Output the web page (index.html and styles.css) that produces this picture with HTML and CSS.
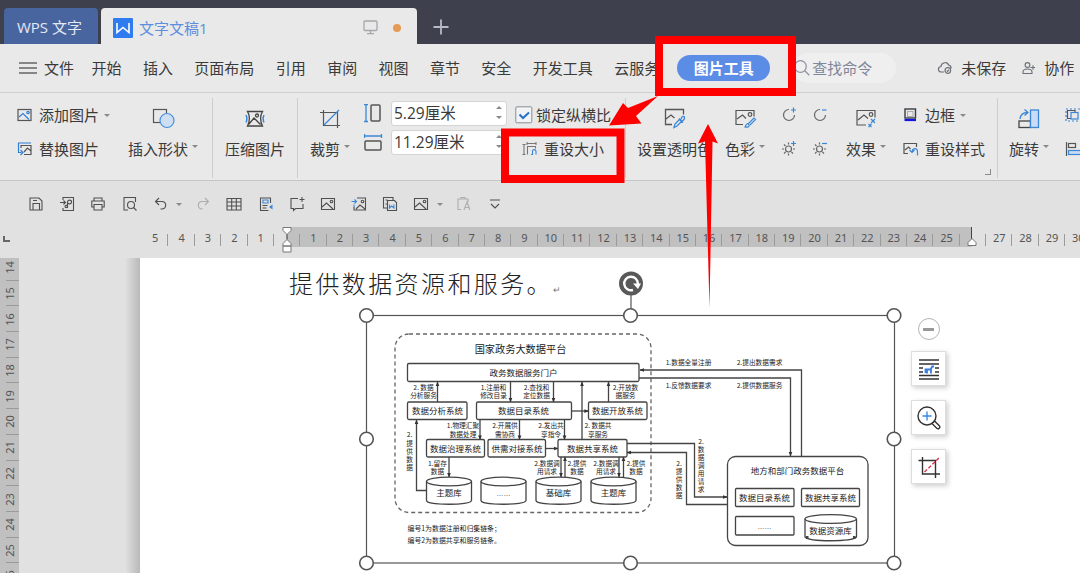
FILE: index.html
```html
<!DOCTYPE html>
<html>

	<head>
		<meta charset="UTF-8">
		<title>文字文稿1</title>
		<link rel="stylesheet" href="styles.css">
		<script src="ruler.js" type="text/javascript" charset="utf-8"></script>
	</head>

	<body>
		<!--标题栏-->
		<div class="titlebar">
			<div class="home-tab">WPS 文字</div>
			<div class="doc-tab">
				<svg class="logo" width="20" height="20"><rect width="20" height="20" rx="1" fill="#2f7bf0"/><path d="M4 5v9.500l6-5 6 5V5" fill="none" stroke="#fff" stroke-width="1.600"/></svg>
				<span class="doc-name">文字文稿1</span>
				<svg width="15" height="15" fill="none" stroke="#a5a7ab" stroke-width="1.300"><rect x="1" y="1" width="13" height="9.500" rx="1"/><path d="M7.500 10.500v3.200M4 13.700h7"/></svg>
				<i class="dot"></i>
			</div>
			<svg class="plus" width="16" height="16"><path d="M8 0.500v15M0.500 8h15" stroke="#b9bbc4" stroke-width="1.800"/></svg>
		</div>

		<!--菜单栏-->
		<div class="menubar">
			<svg class="burger" width="18" height="13"><path d="M0 1h18M0 6h18M0 11h18" stroke="#666" stroke-width="1.300"/></svg>
			<span class="file">文件</span>
			<div class="menu">
				<span>开始</span>
				<span>插入</span>
				<span>页面布局</span>
				<span>引用</span>
				<span>审阅</span>
				<span>视图</span>
				<span>章节</span>
				<span>安全</span>
				<span>开发工具</span>
				<span>云服务</span>
			</div>
			<span class="active">图片工具</span>
			<div class="search">
				<svg width="18" height="18" fill="none" stroke="#8e93a5" stroke-width="1.300"><circle cx="7.500" cy="7.500" r="5.800"/><path d="M11.800 11.800l4.500 4.500"/></svg>
				<span>查找命令</span>
			</div>
			<svg class="cloud" width="16" height="14" fill="none" stroke="#6c7078" stroke-width="1.200"><path d="M7 11H4.500C0.500 11 0.500 6 4 5.500 4.500 1 10.500 0.500 11.500 4c2 0.500 2.800 2 2.500 3.500"/><circle cx="10.800" cy="9.500" r="2.800"/><path d="M9.800 9.500l0.800 0.800 1.200-1.400"/></svg>
			<span class="unsaved">未保存</span>
			<svg class="user" width="14" height="14" fill="none" stroke="#6c7078" stroke-width="1.100"><circle cx="5.500" cy="4" r="2.400"/><path d="M1 12.500V11c0-4 9-4 9 0v1.500zM8.500 6.500h4.500M11 4.300v4.500"/></svg>
			<span>协作</span>
		</div>

		<!--功能区-->
		<div class="ribbon">
			<div class="group g-insert">
				<div class="stack">
					<div class="line">
						<svg width="16" height="14" fill="none" stroke="#555" stroke-width="1.200"><rect x="1" y="1.500" width="13" height="11"/><path d="M2 9l4-3.500 6 6" stroke="#2f7fd6"/><circle cx="11" cy="4.500" r="1.200" stroke="#2f7fd6"/></svg>
						<span>添加图片</span><i class="caret"></i>
					</div>
					<div class="line">
						<svg width="16" height="14" fill="none" stroke="#555" stroke-width="1.200"><path d="M4 6V3.500h10v9H7M7 10l3.500-4L14 9"/><path d="M14 1H1.500v9.500h3M3.500 8l2.500 2.500-2.500 2.500" stroke="#2f7fd6"/></svg>
						<span>替换图片</span>
					</div>
				</div>
				<div class="tool">
					<svg width="24" height="24" fill="none" stroke="#555" stroke-width="1.200"><rect x="2.500" y="2.500" width="13" height="13"/><circle cx="16" cy="13.500" r="7" fill="#cfdff3" stroke="#4a8fdc"/></svg>
					<div class="label">插入形状<i class="caret"></i></div>
				</div>
			</div>

			<div class="group g-zip">
				<div class="tool">
					<svg width="24" height="24" fill="none" stroke="#444" stroke-width="1.300"><path d="M4.500 4.500h15c-2.500 4-2.500 10 0 14.500h-15c2.500-4.500 2.500-10.500 0-14.500zM6 17l5-6 6.500 6.500"/><circle cx="14" cy="8.500" r="1.500"/><path d="M3 8c1.200 2.500 1.200 5 0 7.500M21 8c-1.200 2.500-1.200 5 0 7.500" stroke="#3a87d8" stroke-width="1.500"/></svg>
					<div class="label">压缩图片</div>
				</div>
			</div>

			<div class="group g-size">
				<div class="tool crop">
					<svg width="24" height="24" fill="none" stroke="#555" stroke-width="1.200"><path d="M5.500 3v15.500H22M2 5.500h17.500V21"/><path d="M6 18L21 3" stroke="#3a87d8"/></svg>
					<div class="label">裁剪<i class="caret"></i></div>
				</div>
				<div class="dims">
					<div class="dim">
						<svg width="20" height="20" fill="none" stroke="#555" stroke-width="1.500"><rect x="7" y="1" width="9" height="16" rx="1"/><path d="M2 0.500v17M0 0.500h4M0 17.500h4" stroke="#3a87d8" stroke-width="1.300"/></svg>
						<div class="field"><span>5.29厘米</span><b><i class="up"></i><i class="caret"></i></b></div>
					</div>
					<div class="dim">
						<svg width="20" height="20" fill="none" stroke="#555" stroke-width="1.500"><rect x="1" y="8" width="16" height="9" rx="1"/><path d="M0.500 3h17M0.500 1v4M17.500 1v4" stroke="#3a87d8" stroke-width="1.300"/></svg>
						<div class="field"><span>11.29厘米</span><b><i class="up"></i><i class="caret"></i></b></div>
					</div>
				</div>
				<div class="stack">
					<div class="line lock">
						<svg width="18" height="18" fill="none"><rect x="0.800" y="0.800" width="16" height="16" rx="1" fill="#f1f3f5" stroke="#8a8d92"/><path d="M4.500 8.500l3.500 3.500 6-5.500" stroke="#2570c8" stroke-width="2"/></svg>
						<span>锁定纵横比</span>
					</div>
					<div class="line reset">
						<svg width="16" height="14" fill="none" stroke="#777" stroke-width="1.100"><path d="M2 2.500v10M0.500 2.500h3M0.500 12.500h3M5 1.500h9M5 0v3M14 0v3M5.500 12.500v-8h8v2"/><path d="M9 12.500h1.500v-3c0-2.500 3.500-2.500 3.500 0v3" stroke="#3a87d8"/></svg>
						<span>重设大小</span>
					</div>
				</div>
			</div>

			<div class="group g-style">
				<div class="tool alpha">
					<svg width="24" height="24" fill="none" stroke="#555" stroke-width="1.300"><path d="M9 17.500H2.500v-15h18v5M3 12l5-4 3.500 3"/><path d="M11 20.500l1-3.500 4.500-4.500 2 2-4.500 4.500zM16 11.500l4 4M18 12.500c0.500-3.500 3.500-4 3.500-2s-1 3-2.500 3.500" stroke="#3a87d8"/></svg>
					<div class="label">设置透明色</div>
				</div>
				<div class="tool color">
					<svg width="24" height="24" fill="none" stroke="#555" stroke-width="1.200"><path d="M10 17.500H3v-14h18v6M4 12l5.500-4 3.500 3.500"/><circle cx="17" cy="7.500" r="1.800"/><path d="M12 20c1.500-4 3-4 4-2s-2 2.500-4 2zM15.500 16.500l5.500-5.500 1.500 1.500L17 18" stroke="#3a87d8"/></svg>
					<div class="label">色彩<i class="caret"></i></div>
				</div>
				<div class="minis">
					<svg viewBox="0 0 16 16"><path d="M8 2.500A5.500 5.500 0 1 0 13.500 8"/><path d="M12.500 0.500v5M10 3h5" class="blue"/></svg>
					<svg viewBox="0 0 16 16"><path d="M8 2.500A5.500 5.500 0 1 0 13.500 8"/><path d="M10 3h4.500" class="blue"/></svg>
					<svg viewBox="0 0 16 16"><circle cx="7.500" cy="9" r="3"/><path d="M7.500 2.500v2M7.500 13.500v2M1 9h2M12 9h2M3 4.500l1.500 1.500M3 13.500l1.500-1.500M12 13.500l-1.500-1.500"/><path d="M12.500 1v5M10 3.500h5" class="blue"/></svg>
					<svg viewBox="0 0 16 16"><circle cx="7.500" cy="9" r="3"/><path d="M7.500 2.500v2M7.500 13.500v2M1 9h2M12 9h2M3 4.500l1.500 1.500M3 13.500l1.500-1.500M12 13.500l-1.500-1.500"/><path d="M10 3.500h5" class="blue"/></svg>
				</div>
				<div class="tool effect">
					<svg width="24" height="24" fill="none" stroke="#555" stroke-width="1.200"><path d="M12 18H3V3.500h18v7M4 13l6-5 4 3.500"/><circle cx="17" cy="7.500" r="1.800"/><path d="M17 12l4 4M21 12l-4 4M14.500 17l3 3M17.500 17l-3 3" stroke="#3a87d8"/></svg>
					<div class="label">效果<i class="caret"></i></div>
				</div>
				<div class="stack frame">
					<div class="line">
						<svg width="16" height="14" fill="none"><rect x="2" y="1" width="10.500" height="9" stroke="#3a3c44" stroke-width="1.400"/><rect x="4.500" y="3.500" width="5.500" height="5" stroke="#aaa"/><path d="M1.500 12h11.500" stroke="#1414e0" stroke-width="2.200"/></svg>
						<span>边框</span><i class="caret"></i>
					</div>
					<div class="line">
						<svg width="16" height="14" fill="none" stroke="#555" stroke-width="1.200"><path d="M5 11.500H1V1.500h12.500V5M2 8l3.500-3 2 2"/><path d="M6.500 8l2.500 2.500L11.500 8M9 10.500c0-5 5.500-5 5.500-1v4" stroke="#3a87d8"/></svg>
						<span>重设样式</span>
					</div>
				</div>
				<i class="corner"></i>
			</div>

			<div class="group g-arrange">
				<div class="tool">
					<svg width="24" height="24" fill="none" stroke="#444" stroke-width="1.300"><rect x="2" y="14" width="11.500" height="6.500"/><rect x="13.500" y="3" width="8" height="17.500" fill="#c9dcf3" stroke="#3a87d8"/><path d="M3 12c0.500-4 3-6.500 7.500-6.500M7.500 2.500l3.500 3-3.500 3" stroke="#3a87d8"/></svg>
					<div class="label">旋转<i class="caret"></i></div>
				</div>
				<div class="stack">
					<div class="line"><svg width="16" height="14" fill="none" stroke="#555" stroke-width="1.200"><rect x="1" y="1" width="18" height="12" stroke="#3a87d8" stroke-dasharray="2 2"/><path d="M10 4V2.500H2.500v8H6"/><rect x="6" y="4.500" width="7" height="6.500" stroke="#3a87d8"/></svg></div>
					<div class="line"><svg width="16" height="14" fill="none" stroke="#555" stroke-width="1.200"><path d="M1.500 0v14"/><rect x="3.500" y="1.500" width="7" height="4"/><rect x="3.500" y="8.500" width="14" height="4" fill="#c9dcf3" stroke="#3a87d8"/></svg></div>
				</div>
			</div>
		</div>

		<!--快速访问工具栏-->
		<div class="quickbar">
			<svg viewBox="0 0 16 16"><path d="M2 2h9l3 3v9H2zM5 14V7.500h6.500V14M5 4.500h4"/></svg>
			<svg viewBox="0 0 16 16"><path d="M4 4V1.500h10.500v13H4V12M1 6.500h5.500M4.500 4.500l2 2-2 2"/><path d="M8.500 12V6c0-2.500 4-2.500 4 0s-4 2.500-4 0M6 10.500c0-1.500 2.500-1.500 2.500 0s-2.500 1.500-2.500 0"/></svg>
			<svg viewBox="0 0 16 16"><path d="M4 5V2h8v3M4 11H1.800V5h12.400v6H12M4 8.500h8v5.500H4z"/></svg>
			<svg viewBox="0 0 16 16"><path d="M6 14H2V1.500h11.500V6"/><circle cx="9" cy="9" r="3.500"/><path d="M11.500 11.500L14.500 14.500"/></svg>
			<svg viewBox="0 0 16 16"><path d="M6 2L2.500 5.500 6 9M3 5.500h6c5 0 5 7.500-0.500 7.500H7.500"/></svg>
			<i class="caret"></i>
			<svg viewBox="0 0 16 16" class="off redo"><path d="M10 2l3.500 3.500L10 9M13 5.500H7c-5 0-5 7.500 0.500 7.500"/></svg>
			<svg viewBox="0 0 16 16"><path d="M1 2.500h14v11.500H1zM1 6h14M1 10h14M5.700 2.500V14M10.300 2.500V14"/></svg>
			<svg viewBox="0 0 16 16"><path d="M12.500 7V2h-10v12.500h8M4.500 9.500h5M4.500 12h4"/><path d="M5 4h5v3H5z" class="blue"/><path d="M14.500 8.500v5l-3.500-2.500z" class="fill"/></svg>
			<svg viewBox="0 0 16 16"><path d="M9 2.500H2v10h2.500v2l2-2H14V8M10.500 3.500h5M13 1v5"/></svg>
			<svg viewBox="0 0 16 16"><path d="M1.500 2.500h13v11h-13zM2 11l4.500-4L13 13"/><circle cx="11.500" cy="5.500" r="1.300"/></svg>
			<svg viewBox="0 0 16 16"><path d="M6 2h8.500v12H3v-3M5 13l4-4 5 4"/><circle cx="11.500" cy="5.500" r="1.300"/><path d="M0.500 5.500h5M3.500 3.500l2 2-2 2M3 8.500v3" class="blue"/></svg>
			<svg viewBox="0 0 16 16"><path d="M5 12H1.500V1.500H11V4M3.500 4h2M3.500 8h2M5.500 4.500h7l2 2v8h-9z"/><path d="M7.500 8.500v3.500l2.200-2 2.200 2V8.500" class="blue"/></svg>
			<svg viewBox="0 0 16 16" class="pic"><path d="M1.500 2.500h13v11h-13zM2 11l4.500-4L13 13"/><circle cx="11.500" cy="5.500" r="1.300"/></svg>
			<i class="caret"></i>
			<svg viewBox="0 0 16 16" class="off paste"><path d="M5 13.500H2V3h10v3M5 3V1.500h4V3M8 14l3-8 3 8M9 11.500h4"/></svg>
			<svg viewBox="0 0 16 16" class="more"><path d="M3 4h10M4 8l4 4 4-4"/></svg>
		</div>

		<!--水平标尺-->
		<div class="hruler">
			<i class="tabmark"></i>
			<div class="scale" id="hScale"></div>
			<svg class="indent" width="10" height="26" fill="#fff" stroke="#777"><path d="M1 0.500h8v3L5 7.500 1 3.500z"/><path d="M5 7.500v5" stroke="#333"/><path d="M5 12.500l4 4v2.500H1v-2.500zM1 19h8v6H1z"/></svg>
			<svg class="indent right" width="10" height="20" fill="#fff" stroke="#777"><path d="M4.500 0v13" stroke="#444"/><path d="M5 11.500l4 4v3H1v-3z"/></svg>
		</div>

		<!--文档区域-->
		<div class="work">
			<div class="vruler" id="vScale"></div>
			<div class="gutter"></div>
			<div class="page">
				<p class="para">提供数据资源和服务。<small>↵</small></p>
				<svg class="figure" viewBox="140 258 940 315" width="940" height="315">
					<defs>
						<marker id="arr" viewBox="0 0 6 6" refX="5.500" refY="3" markerWidth="4.500" markerHeight="4.500" markerUnits="userSpaceOnUse" orient="auto"><path d="M0 0.500L6 3 0 5.500z" fill="#333"/></marker>
						<g id="cyl"><path d="M-22.500 4v19c0 5 45 5 45 0V4"/><ellipse cx="0" cy="4" rx="22.500" ry="4.300"/></g>
					</defs>
					<!--国家平台-->
					<g class="box">
						<rect x="395" y="334" width="256" height="178.500" rx="14" class="dash"/>
						<rect x="407.500" y="363.500" width="231.500" height="18" rx="1.500"/>
						<rect x="407.500" y="402" width="59.500" height="17.500" rx="1.500"/>
						<rect x="476.500" y="402" width="95" height="17.500" rx="1.500"/>
						<rect x="588.500" y="402" width="58.500" height="17.500" rx="1.500"/>
						<rect x="426.500" y="439.500" width="58" height="17.500" rx="1.500"/>
						<rect x="488" y="439.500" width="57.500" height="17.500" rx="1.500"/>
						<rect x="558" y="439.500" width="69" height="17.500" rx="1.500"/>
						<use href="#cyl" x="449" y="477.500"/>
						<use href="#cyl" x="503.500" y="477.500"/>
						<use href="#cyl" x="558.500" y="477.500"/>
						<use href="#cyl" x="613.500" y="477.500"/>
						<!--地方和部门平台-->
						<rect x="727.500" y="456.500" width="140.500" height="89" rx="8"/>
						<rect x="735.500" y="488.500" width="58.500" height="18" rx="1"/>
						<rect x="801.500" y="488.500" width="58" height="18" rx="1"/>
						<rect x="735.500" y="516.500" width="58.500" height="18.500" rx="1"/>
						<path d="M805 519v18c5 5 46 5 51.500 0V519"/>
						<ellipse cx="830.700" cy="519" rx="25.700" ry="4.300"/>
						<path d="M806 537.500h2.500M853 537.500h2.500" stroke-width="3"/>
					</g>
					<g class="wire">
						<path d="M437.500 402V382"/>
						<path d="M510.500 382v20"/>
						<path d="M553.500 382v20"/>
						<path d="M582 439V382"/>
						<path d="M608.500 402V382"/>
						<path d="M571.500 411h17"/>
						<path d="M480 419.500v20"/>
						<path d="M519.500 419.500v20"/>
						<path d="M564.500 419.500v20"/>
						<path d="M545.500 448.500h12.500"/>
						<path d="M426.500 490.500h-10V420"/>
						<path d="M449 457v20"/>
						<path d="M561 457v20"/>
						<path d="M565 477V457"/>
						<path d="M619 457v20"/>
						<path d="M623.500 477V457"/>
						<path d="M801.500 456V370H640"/>
						<path d="M639 378h151.500v78"/>
						<path d="M627 443.500h67.500V497H727"/>
						<path d="M727 504.500h-40.500v-52H627"/>
					</g>
					<g class="name">
						<text x="520.500" y="353" class="head">国家政务大数据平台</text>
						<text x="523.500" y="376">政务数据服务门户</text>
						<text x="437.500" y="414">数据分析系统</text>
						<text x="523.500" y="414">数据目录系统</text>
						<text x="617.500" y="414">数据开放系统</text>
						<text x="455.500" y="452">数据治理系统</text>
						<text x="517" y="452">供需对接系统</text>
						<text x="592.500" y="452">数据共享系统</text>
						<text x="449" y="496">主题库</text>
						<text x="503.500" y="496" class="more-dots">……</text>
						<text x="558.500" y="496">基础库</text>
						<text x="613.500" y="496">主题库</text>
						<text x="797.500" y="474" class="sub">地方和部门政务数据平台</text>
						<text x="764.500" y="500.500">数据目录系统</text>
						<text x="830.500" y="500.500">数据共享系统</text>
						<text x="764.500" y="529" class="more-dots">……</text>
						<text x="830.500" y="533.500">数据资源库</text>
					</g>
					<g class="note">
						<text x="423.500" y="389.500">2. 数据</text><text x="423.500" y="398">分析服务</text>
						<text x="493.500" y="389.500">1.注册和</text><text x="493.500" y="398">修改目录</text>
						<text x="536.500" y="389.500">2.查找和</text><text x="536.500" y="398">定位数据</text>
						<text x="625.500" y="389.500">2.开放数</text><text x="625.500" y="398">据服务</text>
						<text x="463" y="427.500">1.物理汇聚</text><text x="463" y="436.500">数据处理</text>
						<text x="505" y="427.500">2.开展供</text><text x="505" y="436.500">需协商</text>
						<text x="551" y="427.500">2.发出共</text><text x="551" y="436.500">享指令</text>
						<text x="598" y="427.500">2. 数据共</text><text x="598" y="436.500">享服务</text>
						<text x="437.500" y="466">1.留存</text><text x="437.500" y="474">数据</text>
						<text x="547" y="466">2.数据调</text><text x="547" y="474">用请求</text>
						<text x="577" y="466">2.提供</text><text x="577" y="474">数据</text>
						<text x="606" y="466">2.数据调</text><text x="606" y="474">用请求</text>
						<text x="636" y="466">2.提供</text><text x="636" y="474">数据</text>
						<text x="688.500" y="365">1.数据全量注册</text>
						<text x="759.500" y="365">2.提出数据需求</text>
						<text x="688.500" y="388">1.反馈数据要求</text>
						<text x="759.500" y="388">2.提供数据服务</text>
						<text y="437"><tspan x="409.500">2.</tspan><tspan x="409.500" dy="9">提</tspan><tspan x="409.500" dy="8">供</tspan><tspan x="409.500" dy="8">数</tspan><tspan x="409.500" dy="8">据</tspan></text>
						<text y="465.500"><tspan x="679">2.</tspan><tspan x="679" dy="8.300">提</tspan><tspan x="679" dy="8">供</tspan><tspan x="679" dy="8">数</tspan><tspan x="679" dy="8">据</tspan></text>
						<text y="444"><tspan x="701">2.</tspan><tspan x="701" dy="8.300">数</tspan><tspan x="701" dy="8">据</tspan><tspan x="701" dy="8">调</tspan><tspan x="701" dy="8">用</tspan><tspan x="701" dy="8">请</tspan><tspan x="701" dy="8">求</tspan></text>
						<text x="407.500" y="530.500" class="foot">编号1为数据注册和归集链条；</text>
						<text x="407.500" y="542.500" class="foot">编号2为数据共享和服务链条。</text>
					</g>
					<!--选中框-->
					<g class="select">
						<rect x="366.500" y="315.500" width="528" height="247.500"/>
						<path d="M631 295v14"/>
						<circle cx="366.500" cy="315.500" r="6.800"/><circle cx="630.500" cy="315.500" r="6.800"/><circle cx="894" cy="315.500" r="6.800"/>
						<circle cx="366.500" cy="439" r="6.800"/><circle cx="894" cy="439" r="6.800"/>
						<circle cx="366.500" cy="563" r="6.800"/><circle cx="630.500" cy="563" r="6.800"/><circle cx="894" cy="563" r="6.800"/>
					</g>
					<circle cx="631" cy="283.500" r="12" fill="#595959"/>
					<path d="M633 290a6.800 6.800 0 1 1 4.800-6" fill="none" stroke="#fff" stroke-width="2.400"/>
					<path d="M633 283.500h8l-3 5.500z" fill="#fff"/>
				</svg>
				<div class="floaters">
					<i class="minus"></i>
					<div class="fbtn"><svg width="24" height="24" fill="none" stroke="#333" stroke-width="1.400"><path d="M2 3h20M2 7h20M2 11h4M18 11h4M2 15h4M18 15h4M2 18.500h20M2 22h20"/><path d="M8.500 16v-3.500h5l2-3.500M10 12.500v4M14 12v4.500M15 9.500h2" stroke="#3a7de0" stroke-width="1.800"/></svg></div>
					<div class="fbtn"><svg width="24" height="24" fill="none" stroke="#333" stroke-width="1.400"><circle cx="10" cy="10" r="9"/><path d="M15 17.500l5 5c1.500 1 3.500-1 2.500-2.500l-5-5z"/><path d="M10 5.500v9M5.500 10h9" stroke="#3a87e8"/></svg></div>
					<div class="fbtn"><svg width="24" height="24" fill="none" stroke="#333" stroke-width="1.400"><path d="M5.500 2v17H23M1.500 5.500h17V23"/><path d="M7.500 17L22 3" stroke="#e0304e" stroke-dasharray="3.500 2"/></svg></div>
				</div>
			</div>
		</div>

		<!--红色标注-->
		<svg class="marks" width="1080" height="573">
			<rect x="659" y="40" width="133" height="52"/>
			<rect x="505" y="132.500" width="115.500" height="46.500"/>
			<path d="M658 96L628 108 623 103 609 125.500 641.500 123.500 636 116z"/>
			<path d="M708 124L698 143.500 705 141.500 709.500 308 712.500 141.500 718 143.500z"/>
		</svg>
	</body>

</html>
```
FILE: ruler.js
```js
window.onload = function() {
	var hScale = document.getElementById("hScale");
	var vScale = document.getElementById("vScale");

	//水平标尺，0和26的位置不显示数字
	for(var i = -5; i <= 30; i++) {
		var cell = document.createElement("span");
		if(i != 0 && i != 26) {
			cell.innerHTML = Math.abs(i);
		}
		hScale.appendChild(cell);
	}

	//垂直标尺
	for(var j = 14; j <= 26; j++) {
		var row = document.createElement("span");
		row.innerHTML = "<b>" + j + "</b>";
		vScale.appendChild(row);
	}
}
```
FILE: styles.css
```css
* {
	margin: 0;
	padding: 0;
	box-sizing: border-box;
}

body {
	width: 1080px;
	height: 573px;
	overflow: hidden;
	position: relative;
	background: #e1e1e1;
	color: #3a3a3a;
	font: 15px/20px "Open Sans", "Noto Sans CJK SC", sans-serif;
	white-space: nowrap;
}

svg {
	display: block;
	flex: none;
}

/*标题栏*/

.titlebar {
	height: 44px;
	padding: 8px 0 0 4px;
	display: flex;
	background: #3f404d;
}

.home-tab {
	width: 94px;
	height: 36px;
	margin-right: 3px;
	padding-left: 13px;
	border-radius: 4px 4px 0 0;
	background: #48659f;
	color: #e4e9f3;
	line-height: 39px;
}

.doc-tab {
	width: 316px;
	height: 36px;
	padding: 3px 16px 0 12px;
	display: flex;
	align-items: center;
	border-radius: 4px 4px 0 0;
	background: #e9e9e9;
}

.doc-name {
	flex: 1;
	margin-left: 6px;
	color: #5c8de0;
}

.dot {
	width: 8px;
	height: 8px;
	margin-left: 15px;
	border-radius: 50%;
	background: #e59a55;
}

.plus {
	margin: 11px 0 0 16px;
}

/*菜单栏*/

.menubar {
	height: 49px;
	padding-left: 19px;
	display: flex;
	align-items: center;
	background: #e9e9e9;
	border-bottom: 1px solid #cfcfcf;
}

.file {
	margin: 0 17.5px 0 7px;
}

.menu {
	display: flex;
	gap: 21.4px;
}

.active {
	width: 93px;
	height: 26px;
	margin-left: 18px;
	border-radius: 13px;
	background: #5b8ce6;
	color: #fff;
	font-weight: bold;
	line-height: 26px;
	text-align: center;
}

.search {
	width: 103px;
	height: 30px;
	margin-left: 23px;
	display: flex;
	align-items: center;
	border-radius: 15px;
	background: #efefef;
	color: #80869a;
}

.search span {
	margin-left: 1px;
}

.cloud {
	margin-left: 41px;
}

.unsaved {
	margin: 0 16px 0 8px;
}

.user {
	margin-right: 8px;
}

/*功能区*/

.ribbon {
	height: 88px;
	display: flex;
	background: #e9e9e9;
	border-bottom: 1px solid #c6c6c6;
}

.group {
	height: 80px;
	margin-top: 5px;
	display: flex;
	flex: none;
	border-right: 1px solid #cdcdcd;
}

.g-insert {
	width: 213px;
	padding-left: 17px;
}

.g-zip {
	width: 85px;
	padding-left: 12px;
}

.g-size {
	width: 328px;
	padding-left: 12px;
}

.g-style {
	width: 372px;
	padding-left: 11px;
	position: relative;
}

.g-arrange {
	padding-left: 11px;
	border: 0;
}

.stack,
.tool {
	display: grid;
	grid-template-rows: 34px 34px;
	align-items: center;
	align-content: start;
	flex: none;
}

.g-insert .stack {
	width: 111px;
}

.line,
.label {
	display: flex;
	align-items: center;
}

.line svg {
	margin-right: 6px;
}

.tool {
	justify-items: center;
	justify-content: start;
}

.tool svg {
	margin-top: 7px;
}

.crop {
	width: 54px;
}

.alpha {
	width: 88px;
}

.color {
	width: 55px;
}

.effect {
	width: 57px;
}

.g-arrange .tool {
	width: 56px;
}

.caret {
	margin-left: 5px;
	border: 3px solid transparent;
	border-top-color: #8a8a8a;
	border-bottom: 0;
}

.label .caret {
	margin: -5px 0 0 4px;
}

.dims {
	width: 151px;
	padding-top: 3px;
}

.dim {
	height: 25px;
	margin-bottom: 4px;
	display: flex;
	align-items: center;
}

.field {
	width: 116px;
	height: 25px;
	margin-left: 7px;
	padding: 0 4px 2px 2px;
	display: flex;
	align-items: center;
	justify-content: space-between;
	border: 1px solid #d4d4d4;
	border-radius: 3px;
	background: #fff;
	font-size: 15.5px;
}

.field b {
	display: flex;
	flex-direction: column;
	gap: 7px;
}

.field .caret {
	margin: 0;
}

.up {
	border: 3px solid transparent;
	border-bottom-color: #8a8a8a;
	border-top: 0;
}

.lock svg {
	margin-right: 3px;
}

.reset {
	padding-left: 7px;
}

.minis {
	width: 66px;
	padding: 9px 0 0 1px;
	display: grid;
	grid-template-columns: 31px 31px;
	grid-template-rows: 33px 33px;
}

.minis svg {
	width: 16px;
	height: 16px;
	fill: none;
	stroke: #666;
	stroke-width: 1.2;
}

.minis .blue,
.quickbar .blue {
	stroke: #3a87d8;
}

.quickbar .fill {
	fill: #3a87d8;
	stroke: none;
}

.corner {
	width: 6px;
	height: 6px;
	position: absolute;
	right: 6px;
	bottom: 3px;
	border: solid #8a8a8a;
	border-width: 0 1px 1px 0;
}

/*快速访问工具栏*/

.quickbar {
	height: 46px;
	padding-left: 28px;
	display: flex;
	align-items: center;
	gap: 15.2px;
}

.quickbar svg {
	width: 16px;
	height: 16px;
	fill: none;
	stroke: #505050;
	stroke-width: 1.1;
}

.quickbar .off {
	stroke: #adadad;
}

.quickbar .caret {
	margin: 0 0 0 -8px;
}

.quickbar .redo {
	margin-left: -2px;
}

.quickbar .paste {
	margin-left: -2px;
}

/*标尺*/

.hruler {
	height: 31px;
	position: relative;
	padding-left: 142px;
	overflow: hidden;
	background: linear-gradient(#c0c0c0, #c0c0c0) 287px 0 / 685px 20px no-repeat;
}

.scale {
	height: 20px;
	display: flex;
	color: #555;
	font: 11px/22px "Noto Sans", sans-serif;
}

.scale span {
	flex: none;
	width: 26.38px;
	text-align: center;
	background: linear-gradient(#9a9a9a, #9a9a9a) right 7px / 1px 12px no-repeat;
}

.tabmark {
	width: 7px;
	height: 6px;
	position: absolute;
	left: 3px;
	top: 9px;
	border: solid #666;
	border-width: 0 0 2px 2px;
}

.indent {
	position: absolute;
	left: 282px;
	top: 0;
}

.indent.right {
	left: 967px;
}

/*文档区域*/

.work {
	height: 315px;
	display: flex;
}

.vruler {
	width: 19px;
	overflow: hidden;
	background: #c0c0c0;
	color: #555;
	font: 11px/13px "Noto Sans", sans-serif;
}

.vruler span {
	height: 25.73px;
	display: flex;
	align-items: center;
	justify-content: center;
	background: linear-gradient(#9a9a9a, #9a9a9a) 6px bottom / 13px 1px no-repeat;
}

.vruler span:first-child {
	height: 22.5px;
	padding-bottom: 3px;
}

.vruler b {
	font-weight: normal;
	transform: rotate(-90deg);
}

.gutter {
	width: 121px;
	background: linear-gradient(90deg, #e1e1e1 106px, #b9b9b9);
}

.page {
	width: 940px;
	position: relative;
	background: #fff;
}

.para {
	padding: 7px 0 0 149px;
	color: #222;
	font: 300 24px/36px "Noto Sans CJK SC", sans-serif;
	letter-spacing: 2.4px;
}

.para small {
	color: #777;
	font-size: 9px;
}

.figure {
	position: absolute;
	left: 0;
	top: 0;
}

.box,
.wire {
	fill: none;
	stroke: #444;
	stroke-width: 1.3;
}

.dash {
	stroke: #666;
	stroke-dasharray: 4 3;
}

.wire path {
	marker-end: url(#arr);
}

.name,
.note {
	fill: #222;
	font-family: "Noto Sans CJK SC", sans-serif;
	text-anchor: middle;
}

.name {
	font-size: 8.5px;
}

.name .head {
	font-size: 10.2px;
}

.name .more-dots {
	font-family: "Liberation Sans", sans-serif;
	font-size: 7px;
}

.note {
	font-size: 6.7px;
}

.note .foot {
	font-size: 6.9px;
	text-anchor: start;
}

.select {
	fill: none;
	stroke: #555;
	stroke-width: 1.2;
}

.select circle {
	fill: #fff;
	stroke-width: 1.6;
}

.floaters {
	position: absolute;
	left: 771px;
	top: 60px;
	display: flex;
	flex-direction: column;
	align-items: center;
	gap: 14px;
}

.minus {
	width: 22px;
	height: 22px;
	margin-bottom: -3px;
	border: 1px solid #b5b5b5;
	border-radius: 50%;
	background: linear-gradient(#999, #999) center / 11px 3px no-repeat;
}

.fbtn {
	width: 35px;
	height: 35px;
	display: flex;
	align-items: center;
	justify-content: center;
	border: 1px solid #ddd;
	background: #fff;
	box-shadow: 2px 2px 5px rgba(0, 0, 0, .2);
}

/*红色标注*/

.marks {
	position: absolute;
	left: 0;
	top: 0;
}

.marks rect {
	fill: none;
	stroke: #fe0000;
	stroke-width: 8;
}

.marks path {
	fill: #fe0000;
}
```
